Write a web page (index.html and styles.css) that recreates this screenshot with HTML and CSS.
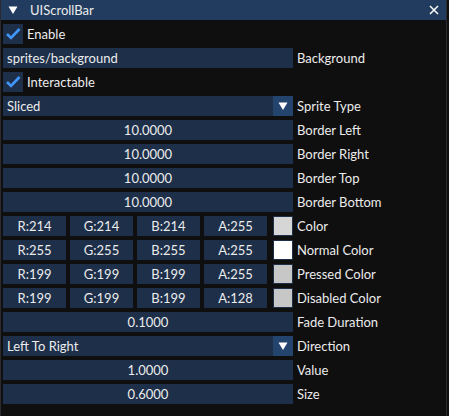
FILE: index.html
```html
<!DOCTYPE html>
<html>
<head>
<meta charset="utf-8">
<link rel="stylesheet" href="styles.css">
</head>
<body>
<div class="window">
  <div class="titlebar">
    <svg class="collapse" width="10" height="10" viewBox="0 0 10 10"><polygon points="0.5,1.5 9.5,1.5 5,9" fill="#fff"/></svg>
    <span class="title">UIScrollBar</span>
    <svg class="close" width="10" height="10" viewBox="0 0 10 10"><path d="M1 1 L9 9 M9 1 L1 9" stroke="#fff" stroke-width="1.5" fill="none"/></svg>
  </div>
  <div class="body">
    <div class="row">
      <div class="check"><svg width="16" height="14" viewBox="0 0 16 14"><path d="M2 7 L6 11 L14.5 2" stroke="#4296fa" stroke-width="2.6" fill="none"/></svg></div>
      <span class="clabel">Enable</span>
    </div>
    <div class="row">
      <div class="widget frame left">sprites/background</div>
      <span class="label">Background</span>
    </div>
    <div class="row">
      <div class="check"><svg width="16" height="14" viewBox="0 0 16 14"><path d="M2 7 L6 11 L14.5 2" stroke="#4296fa" stroke-width="2.6" fill="none"/></svg></div>
      <span class="clabel">Interactable</span>
    </div>
    <div class="row">
      <div class="widget combo"><div class="frame left grow">Sliced</div><div class="arrow"><svg width="10" height="10" viewBox="0 0 10 10"><polygon points="0.5,1.5 9.5,1.5 5,9" fill="#fff"/></svg></div></div>
      <span class="label">Sprite Type</span>
    </div>
    <div class="row"><div class="widget frame">10.0000</div><span class="label">Border Left</span></div>
    <div class="row"><div class="widget frame">10.0000</div><span class="label">Border Right</span></div>
    <div class="row"><div class="widget frame">10.0000</div><span class="label">Border Top</span></div>
    <div class="row"><div class="widget frame">10.0000</div><span class="label">Border Bottom</span></div>
    <div class="row">
      <div class="widget color"><div class="frame c">R:214</div><div class="frame c">G:214</div><div class="frame c">B:214</div><div class="frame c">A:255</div><div class="swatch s214"></div></div>
      <span class="label">Color</span>
    </div>
    <div class="row">
      <div class="widget color"><div class="frame c">R:255</div><div class="frame c">G:255</div><div class="frame c">B:255</div><div class="frame c">A:255</div><div class="swatch s255"></div></div>
      <span class="label">Normal Color</span>
    </div>
    <div class="row">
      <div class="widget color"><div class="frame c">R:199</div><div class="frame c">G:199</div><div class="frame c">B:199</div><div class="frame c">A:255</div><div class="swatch s199"></div></div>
      <span class="label">Pressed Color</span>
    </div>
    <div class="row">
      <div class="widget color"><div class="frame c">R:199</div><div class="frame c">G:199</div><div class="frame c">B:199</div><div class="frame c">A:128</div><div class="swatch s199"></div></div>
      <span class="label">Disabled Color</span>
    </div>
    <div class="row"><div class="widget frame">0.1000</div><span class="label">Fade Duration</span></div>
    <div class="row">
      <div class="widget combo"><div class="frame left grow">Left To Right</div><div class="arrow"><svg width="10" height="10" viewBox="0 0 10 10"><polygon points="0.5,1.5 9.5,1.5 5,9" fill="#fff"/></svg></div></div>
      <span class="label">Direction</span>
    </div>
    <div class="row"><div class="widget frame">1.0000</div><span class="label">Value</span></div>
    <div class="row"><div class="widget frame">0.6000</div><span class="label">Size</span></div>
  </div>
</div>
</body>
</html>
```
FILE: styles.css
```css
html, body {
  margin: 0;
  padding: 0;
  background: #0f0f0f;
}
body {
  width: 449px;
  height: 416px;
  overflow: hidden;
  font-family: "Lato", "Open Sans", sans-serif;
  font-size: 13px;
  color: #ececec;
}
.window {
  width: 447px;
  height: 416px;
  border-left: 1px solid #2a2a30;
  border-right: 1px solid #2a2a30;
  box-sizing: border-box;
  background: #0f0f0f;
}
.titlebar {
  height: 20px;
  background: #213c5e;
  display: flex;
  align-items: center;
  padding-left: 7px;
  padding-right: 7px;
}
.collapse { display: block; }
.title { margin-left: 12px; flex: 1; }
.close { display: block; }
.body {
  padding: 4px 0 0 2px;
  display: flex;
  flex-direction: column;
  gap: 4px;
}
.row {
  display: flex;
  align-items: center;
  height: 20px;
  gap: 4px;
}
.widget {
  width: 290px;
  height: 20px;
  flex: none;
}
.frame {
  background: #1d2f49;
  height: 20px;
  display: flex;
  align-items: center;
  justify-content: center;
  white-space: nowrap;
}
.frame.left {
  justify-content: flex-start;
  padding-left: 4px;
  box-sizing: border-box;
}
.combo { display: flex; }
.grow { flex: 1; }
.arrow {
  width: 20px;
  height: 20px;
  background: #23456d;
  display: flex;
  align-items: center;
  justify-content: center;
}
.check {
  width: 20px;
  height: 20px;
  background: #1d2f49;
  display: flex;
  align-items: center;
  justify-content: center;
}
.label { white-space: nowrap; }
.color {
  display: flex;
  gap: 4px;
}
.frame.c { width: 63px; flex: none; }
.swatch {
  width: 20px;
  height: 20px;
  margin-left: 2px;
  box-sizing: border-box;
  border: 1px solid #1d2f49;
}
.s214 { background: #d6d6d6; }
.s255 { background: #ffffff; }
.s199 { background: #c7c7c7; }
```
